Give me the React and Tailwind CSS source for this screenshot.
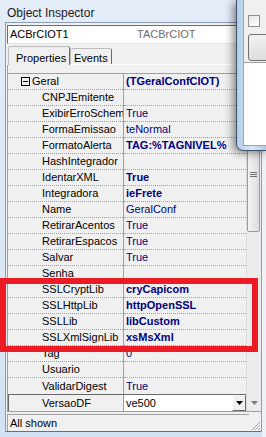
const rows = [
  { name: "Geral", value: "(TGeralConfCIOT)", bold: true, group: true },
  { name: "CNPJEmitente", value: "" },
  { name: "ExibirErroSchema", value: "True" },
  { name: "FormaEmissao", value: "teNormal" },
  { name: "FormatoAlerta", value: "TAG:%TAGNIVEL%", bold: true },
  { name: "HashIntegrador", value: "" },
  { name: "IdentarXML", value: "True", bold: true },
  { name: "Integradora", value: "ieFrete", bold: true },
  { name: "Name", value: "GeralConf" },
  { name: "RetirarAcentos", value: "True" },
  { name: "RetirarEspacos", value: "True" },
  { name: "Salvar", value: "True" },
  { name: "Senha", value: "" },
  { name: "SSLCryptLib", value: "cryCapicom", bold: true },
  { name: "SSLHttpLib", value: "httpOpenSSL", bold: true },
  { name: "SSLLib", value: "libCustom", bold: true },
  { name: "SSLXmlSignLib", value: "xsMsXml", bold: true },
  { name: "Tag", value: "0" },
  { name: "Usuario", value: "" },
  { name: "ValidarDigest", value: "True" },
];

function DownArrow({ color = "#000" }) {
  return (
    <svg width="7" height="4" viewBox="0 0 7 4">
      <path d="M0 0h7L3.5 4z" fill={color} />
    </svg>
  );
}

function Grid() {
  return (
    <div className="ml-[1px] flex flex-col border-l border-[#a0a0a0]">
      <div className="h-[8px]" />
      <div className="flex border-t border-b border-[#a0a0a0]">
        <div className="w-[238px] flex flex-col">
          <div className="flex">
            {/* name column */}
            <div className="w-[115px] flex flex-col">
              {rows.map((r, i) => (
                <div
                  key={r.name}
                  className={`h-[16px] flex items-center whitespace-nowrap overflow-hidden text-black ${
                    i < rows.length - 1 ? "border-b border-dotted border-[#a0a0a0]" : "h-[15px]"
                  } ${r.group ? "pl-[13px]" : "pl-[34px]"}`}
                >
                  {r.group && (
                    <div className="w-[9px] h-[9px] mr-[2px] border border-black flex items-center justify-center">
                      <div className="w-[5px] h-px bg-black" />
                    </div>
                  )}
                  {r.name}
                </div>
              ))}
            </div>
            {/* value column */}
            <div className="flex-1 flex flex-col border-l border-[#a0a0a0]">
              {rows.map((r, i) => (
                <div
                  key={r.name}
                  className={`h-[16px] flex items-center pl-[2px] whitespace-nowrap overflow-hidden text-[#000080] ${
                    r.bold ? "font-bold" : ""
                  } ${i < rows.length - 1 ? "border-b border-dotted border-[#a0a0a0]" : "h-[15px]"}`}
                >
                  {r.value}
                </div>
              ))}
            </div>
          </div>
          {/* selected row */}
          <div className="h-[17px] flex border-t border-l border-[#696969]">
            <div className="w-[114px] pl-[33px] flex items-center bg-[#f0f0f0]">VersaoDF</div>
            <div className="flex-1 flex bg-white border-l border-[#a0a0a0]">
              <div className="flex-1 pl-[2px] flex items-center text-black">ve500</div>
              <div className="w-[14px] flex items-center justify-center bg-[#f0f0f0] border-t border-l border-white border-b border-r border-b-[#696969] border-r-[#696969]">
                <DownArrow />
              </div>
            </div>
          </div>
        </div>
        {/* scrollbar */}
        <div className="w-[15px] flex flex-col bg-[#ececec] border-l border-[#dcdcdc]">
          <div className="h-[16px]" />
          <div className="h-[26px]" />
          <div className="h-[116px] mr-[1px] rounded-[2px] border border-[#9c9c9c] bg-gradient-to-r from-[#f4f4f4] to-[#dcdcdc] flex flex-col items-center justify-center gap-[1px]">
            <div className="w-[7px] h-px bg-[#6f6f6f]" />
            <div className="w-[7px] h-px bg-[#6f6f6f]" />
            <div className="w-[7px] h-px bg-[#6f6f6f]" />
          </div>
          <div className="flex-1" />
          <div className="h-[16px] flex items-center justify-center">
            <DownArrow color="#7c7c7c" />
          </div>
        </div>
      </div>
    </div>
  );
}

export default function App() {
  return (
    <div className="relative w-[266px] h-[437px] overflow-hidden bg-[#eef2f7] font-['Liberation_Sans',Arial,sans-serif] text-[11px] leading-[13px]">
      {/* Object Inspector window */}
      <div className="w-[262px] h-[437px] flex flex-col bg-gradient-to-b from-[#e4edf8] to-[#d3e2f3]">
        <div className="h-[22px] pl-[7px] pt-[6px] text-[12px] leading-[14px] text-[#1b1b1b]">Object Inspector</div>
        <div className="ml-[5px] w-[257px] h-[410px] flex flex-col bg-[#f0f0f0] border-t border-l border-r border-[#8c9db2]">
          {/* component combo */}
          <div className="mt-[2px] ml-[1px] h-[20px] w-[260px] flex items-center bg-white border-t border-l border-[#6e6e6e] border-b border-b-[#e3e3e3]">
            <span className="pl-[2px] w-[129px] text-black">ACBrCIOT1</span>
            <span className="text-[#6d6d6d]">TACBrCIOT</span>
          </div>
          {/* tabs */}
          <div className="mt-[2px] h-[19px] flex items-end pl-[2px] border-b border-white">
            <div className="h-[19px] w-[62px] pl-[7px] pt-[5px] bg-[#f0f0f0] border-t border-l border-[#bcbcbc] border-r border-r-[#696969] rounded-t-[2px] -mb-px">
              Properties
            </div>
            <div className="h-[16px] w-[42px] pl-[3px] pt-[3px] border-t border-l border-[#bcbcbc] border-r border-r-[#696969] rounded-t-[2px]">
              Events
            </div>
          </div>
          <Grid />
          {/* status bar */}
          <div className="h-[20px] flex pl-[1px] pt-[2px] border-b border-[#5f7189]">
            <div className="flex-1 flex items-center pl-[2px] border-t border-l border-[#a0a0a0] text-black">All shown</div>
            <div className="w-[12px] flex items-end justify-end">
              <svg width="11" height="11" viewBox="0 0 11 11">
                <path d="M10 2L2 10M10 5L5 10M10 8L8 10" stroke="#a0a0a0" strokeWidth="1" />
                <path d="M11 3L3 11M11 6L6 11M11 9L9 11" stroke="#ffffff" strokeWidth="1" />
              </svg>
            </div>
          </div>
        </div>
        <div className="flex-1" />
      </div>

      {/* overlapping window */}
      <div className="absolute left-[236px] top-0 w-[32px] h-[151px] overflow-hidden rounded-bl-[7px] border-l border-b border-[#3f5169] bg-gradient-to-r from-[#b4cdea] via-[#dbe8f7] to-[#a9c4e4] pl-[6px] pb-[4px] shadow-[-3px_2px_9px_rgba(0,0,0,0.45)]">
        <div className="h-full flex flex-col border-l border-b border-[#8ea5c1]">
          <div className="h-[63px] bg-[#f0f0f0] border-b border-[#a0a0a0] pl-[4px] pt-[15px] flex flex-col">
            <div className="w-[12px] h-[12px] border border-[#8e8f8f] bg-gradient-to-br from-[#e4e4e4] to-white" />
            <div className="mt-[7px] h-[27px] w-[40px] rounded-[3px] border border-[#707070] bg-gradient-to-b from-[#f2f2f2] to-[#dddddd]" />
          </div>
          <div className="flex-1 bg-white" />
        </div>
      </div>

      {/* red highlight */}
      <div className="absolute left-0 top-[278px] w-[258px] h-[74px] border-[6px] border-[#ed1c24]" />
    </div>
  );
}
